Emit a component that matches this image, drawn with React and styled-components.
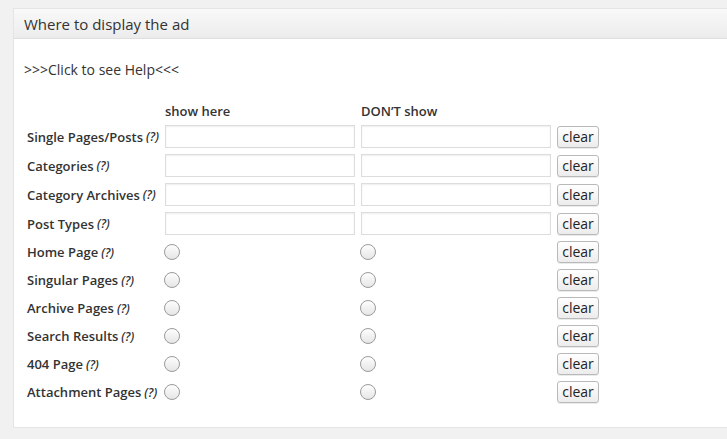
import React from "react";
import styled, { createGlobalStyle } from "styled-components";

const Global = createGlobalStyle`
  html, body { margin: 0; padding: 0; overflow: hidden; }
  body {
    background: #f1f1f1;
    font-family: "Open Sans", "Liberation Sans", sans-serif;
    color: #333;
  }
`;

const Page = styled.div`
  padding: 8px 0 0 13px;
  width: 760px;
`;

const Panel = styled.section`
  background: #fff;
  border: 1px solid #e5e5e5;
  box-shadow: 0 1px 1px rgba(0, 0, 0, 0.04);
`;

const Header = styled.h3`
  margin: 0;
  height: 29px;
  padding: 0 10px;
  display: flex;
  align-items: center;
  font-size: 15px;
  font-weight: 400;
  color: #333;
  background: linear-gradient(to bottom, #f9f9f9, #ececec);
  border-bottom: 1px solid #dfdfdf;
`;

const Body = styled.div`
  padding: 21px 11px 21px 10px;
`;

const HelpLink = styled.div`
  font-size: 14px;
  line-height: 19px;
  color: #333;
  margin-bottom: 23px;
`;

const Grid = styled.div`
  display: grid;
  grid-template-columns: 132px 190px 190px 42px;
  column-gap: 6px;
  align-items: center;
  padding-left: 3px;
`;

const ColHead = styled.div`
  font-size: 13px;
  font-weight: 600;
  height: 17px;
  line-height: 17px;
  margin: 1px 0 2px;
`;

const Label = styled.div`
  font-size: 13px;
  font-weight: 600;
  white-space: nowrap;
  height: ${(p) => (p.$tall ? 29 : 28)}px;
  display: flex;
  align-items: center;
  em { font-weight: 600; font-style: italic; font-size: 12px; margin-left: 3px; }
`;

const TextBox = styled.input`
  box-sizing: border-box;
  width: 190px;
  height: 23px;
  border: 1px solid #ddd;
  box-shadow: inset 0 1px 2px rgba(0, 0, 0, 0.07);
  background: #fff;
  margin: 0;
  padding: 0 4px;
  font: inherit;
`;

const Radio = styled.span`
  display: block;
  box-sizing: border-box;
  width: 16px;
  height: 16px;
  border-radius: 50%;
  border: 1px solid #9a9a9a;
  background: linear-gradient(to bottom, #fdfdfd, #e6e6e6);
  box-shadow: inset 0 1px 1px rgba(255,255,255,0.8);
  margin-left: -1px;
`;

const Empty = styled.span``;

const ClearButton = styled.button`
  box-sizing: border-box;
  width: 42px;
  height: 22px;
  padding: 0;
  font-family: "Open Sans", "Liberation Sans", sans-serif;
  font-size: 14px;
  line-height: 18px;
  color: #222;
  border: 1px solid #b9b9b9;
  border-radius: 3px;
  background: linear-gradient(to bottom, #ffffff, #ececec);
  box-shadow: 0 1px 0 rgba(0,0,0,0.08);
`;

const textRows = ["Single Pages/Posts", "Categories", "Category Archives", "Post Types"];
const radioRows = [
  "Home Page",
  "Singular Pages",
  "Archive Pages",
  "Search Results",
  "404 Page",
  "Attachment Pages",
];

export default function App() {
  return (
    <>
      <Global />
      <Page>
        <Panel>
          <Header>Where to display the ad</Header>
          <Body>
            <HelpLink>&gt;&gt;&gt;Click to see Help&lt;&lt;&lt;</HelpLink>
            <Grid>
              <Empty />
              <ColHead>show here</ColHead>
              <ColHead>DON’T show</ColHead>
              <Empty />
              {textRows.map((r) => (
                <React.Fragment key={r}>
                  <Label $tall>
                    {r}
                    <em>(?)</em>
                  </Label>
                  <TextBox type="text" />
                  <TextBox type="text" />
                  <ClearButton>clear</ClearButton>
                </React.Fragment>
              ))}
              {radioRows.map((r) => (
                <React.Fragment key={r}>
                  <Label>
                    {r}
                    <em>(?)</em>
                  </Label>
                  <Radio />
                  <Radio />
                  <ClearButton>clear</ClearButton>
                </React.Fragment>
              ))}
            </Grid>
          </Body>
        </Panel>
      </Page>
    </>
  );
}
